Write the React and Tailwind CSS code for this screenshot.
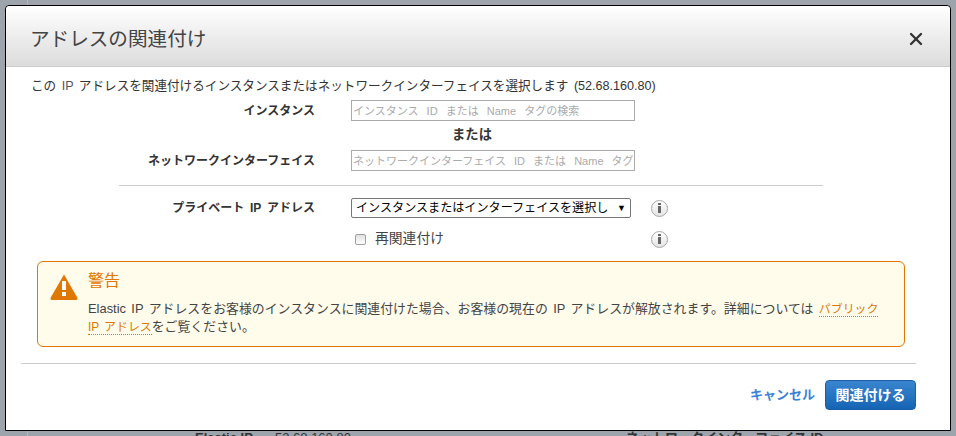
import { X } from "lucide-react";

const font = "font-['Liberation_Sans','Noto_Sans_CJK_JP',sans-serif]";

function InfoIcon() {
  return (
    <span className="w-[17px] h-[17px] rounded-full border border-[#a8a8a8] bg-gradient-to-b from-white to-[#e4e4e4] flex flex-col items-center justify-center gap-[1px]">
      <span className="w-[3px] h-[2px] bg-[#666]" />
      <span className="w-[3px] h-[7px] bg-[#666]" />
    </span>
  );
}

function Row({ label, children, className }) {
  return (
    <div className={`flex items-center ${className}`}>
      <div className="w-[309px] text-right text-[12px] font-bold text-[#333] [word-spacing:2.5px]">{label}</div>
      <div className="ml-[36px]">{children}</div>
    </div>
  );
}

export default function App() {
  return (
    <div className={`w-[956px] h-[436px] bg-[#9da4ac] overflow-hidden text-[12.6px] leading-[18px] ${font}`}>
      <div className="h-[5px] pl-[27px]">
        <div className="w-px h-[5px] bg-[#b4b9bf]" />
      </div>

      <div className="ml-[5px] w-[946px] h-[426px] bg-white border border-black rounded-t-[4px] flex flex-col">
        <div className="h-[61px] shrink-0 flex items-center justify-between pt-[5px] pl-[24px] pr-[24px] border-b border-[#ccc] bg-gradient-to-b from-white to-[#dcdcdc] rounded-t-[4px]">
          <h1 className="text-[19.6px] text-[#444]">アドレスの関連付け</h1>
          <X size={20} strokeWidth={2.8} className="text-[#333]" />
        </div>

        <div className="flex-1 flex flex-col">
          <p className="pl-[25px] mt-[10px] text-[#333] [word-spacing:2px]">
            この <span className="text-[#555]">IP</span> アドレスを関連付けるインスタンスまたはネットワークインターフェイスを選択します (52.68.160.80)
          </p>

          <Row label="インスタンス" className="mt-[5px]">
            <input
              readOnly
              placeholder="インスタンス ID または Name タグの検索"
              className="w-[284px] h-[21px] border border-[#aaa] px-[1px] text-[11px] [word-spacing:5px] placeholder:text-[#aaa] outline-none"
            />
          </Row>
          <div className="text-center w-[932px] text-[13.3px] font-bold text-[#333] mt-[5px]">または</div>
          <Row label="ネットワークインターフェイス" className="mt-[6px]">
            <input
              readOnly
              placeholder="ネットワークインターフェイス ID または Name タグの検索"
              className="w-[284px] h-[21px] border border-[#aaa] px-[1px] text-[11px] [word-spacing:5px] placeholder:text-[#aaa] outline-none"
            />
          </Row>

          <div className="ml-[113px] w-[704px] h-px bg-[#ccc] mt-[14px]" />

          <Row label="プライベート IP アドレス" className="mt-[12px]">
            <div className="flex items-center">
              <div className="w-[280px] h-[20px] border border-[#767676] rounded-[2px] flex items-center justify-between pl-[4px] pr-[4px] text-[12.1px] text-black whitespace-nowrap">
                <span>インスタンスまたはインターフェイスを選択し</span>
                <span className="shrink-0 text-[9px]">▼</span>
              </div>
              <div className="ml-[20px]"><InfoIcon /></div>
            </div>
          </Row>
          <div className="flex items-center mt-[12px] ml-[349px]">
            <span className="w-[11px] h-[11px] border border-[#a0a0a0] rounded-[2px] bg-gradient-to-b from-[#e0e0e0] to-white" />
            <span className="ml-[9px] w-[276px] text-[13.8px] text-[#444]">再関連付け</span>
            <InfoIcon />
          </div>

          <div className="ml-[31px] mt-[13px] w-[868px] h-[86px] border border-[#e07700] rounded-[6px] bg-[#fffcec] flex">
            <svg width="28" height="27" viewBox="0 0 28 27" className="ml-[12px] mt-[12px] shrink-0">
              <path d="M14 0.5 L27.5 24 Q28 26 26 26 L2 26 Q0 26 0.5 24 Z" fill="#e07700" />
              <rect x="12" y="7" width="4" height="9" fill="#fff" />
              <rect x="12" y="18" width="4" height="4" fill="#fff" />
            </svg>
            <div className="ml-[10px]">
              <div className="text-[16px] leading-[20px] mt-[9px] text-[#e07700]">警告</div>
              <p className="mt-[9px] w-[800px] text-[12.9px] text-[#444] [word-spacing:1.8px]">
                Elastic IP アドレスをお客様のインスタンスに関連付けた場合、お客様の現在の IP アドレスが解放されます。詳細については{" "}
                <a className="text-[11.9px] text-[#e07700] border-b border-dotted border-[#e07700]">パブリック IP アドレス</a>
                をご覧ください。
              </p>
            </div>
          </div>

          <div className="ml-[15px] w-[895px] h-px bg-[#ccc] mt-[16px]" />

          <div className="flex items-center justify-end mt-[16px] w-[910px]">
            <a className="text-[13px] text-[#3b82d6] font-bold mr-[10px]">キャンセル</a>
            <button className="w-[91px] h-[30px] rounded-[4px] border border-[#1a5fa8] bg-gradient-to-b from-[#3a85cf] to-[#1464b4] text-[14px] text-white font-bold">関連付ける</button>
          </div>
        </div>
      </div>

      <div className="h-[5px] overflow-hidden flex text-[13px] leading-[14px] text-[#333]">
        <span className="ml-[27px] w-px bg-[#b4b9bf]" />
        <span className="ml-[167px] w-[80px] font-bold">Elastic IP</span>
        <span className="w-[351px]">52.68.160.80</span>
        <span className="font-bold">ネットワークインターフェイス ID</span>
      </div>
    </div>
  );
}
